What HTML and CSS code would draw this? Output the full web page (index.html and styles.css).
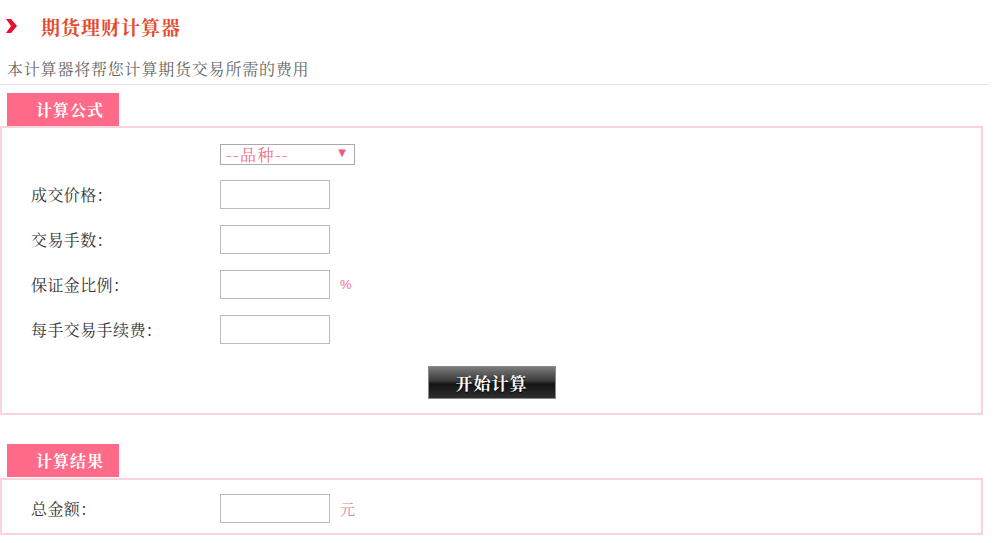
FILE: index.html
```html
<!DOCTYPE html>
<html lang="zh-CN">
<head>
    <meta charset="UTF-8">
    <title>期货理财计算器</title>
    <link rel="stylesheet" href="styles.css">
</head>
<body>
    <div class="page">
        <div class="title">
            <svg class="chevron" width="11" height="14" viewBox="0 0 11 14">
                <polygon points="0,0 5,0 11,7 5,14 0,14 5,7" fill="#e8102a"/>
            </svg>
            <h1>期货理财计算器</h1>
        </div>
        <p class="intro">本计算器将帮您计算期货交易所需的费用</p>

        <div class="tab">计算公式</div>
        <div class="box">
            <div class="form-row">
                <span class="label"></span>
                <div class="select-wrap">
                    <select class="kind">
                        <option>--品种--</option>
                    </select>
                    <span class="arrow">▼</span>
                </div>
            </div>
            <div class="form-row">
                <span class="label">成交价格：</span>
                <input type="text" class="field">
            </div>
            <div class="form-row">
                <span class="label">交易手数：</span>
                <input type="text" class="field">
            </div>
            <div class="form-row">
                <span class="label">保证金比例：</span>
                <input type="text" class="field">
                <span class="unit">%</span>
            </div>
            <div class="form-row">
                <span class="label">每手交易手续费：</span>
                <input type="text" class="field">
            </div>
            <div class="actions">
                <button class="calc-btn">开始计算</button>
            </div>
        </div>

        <div class="tab tab-result">计算结果</div>
        <div class="box box-result">
            <div class="form-row">
                <span class="label">总金额：</span>
                <input type="text" class="field">
                <span class="unit unit-yuan">元</span>
            </div>
        </div>
    </div>
</body>
</html>
```

FILE: styles.css
```css
* {
    margin: 0;
    padding: 0;
    box-sizing: border-box;
}

body {
    font-family: "Noto Serif CJK SC", "Liberation Serif", "Noto Sans CJK SC", serif;
    background: #fff;
    color: #333;
}

.page {
    width: 990px;
}

.title {
    display: flex;
    align-items: center;
    height: 52px;
    padding-left: 6px;
}

.chevron {
    margin-right: 24px;
}

.title h1 {
    font-size: 19px;
    font-weight: bold;
    color: #e64a2e;
    letter-spacing: 1px;
}

.intro {
    font-size: 16px;
    color: #666;
    letter-spacing: 0.8px;
    padding: 5px 0 0 7px;
    height: 33px;
    border-bottom: 1px solid #e6e6e6;
}

.tab {
    width: 112px;
    height: 33px;
    margin: 8px 0 0 7px;
    background: #ff6a88;
    color: #fff;
    font-size: 16px;
    font-weight: bold;
    line-height: 33px;
    padding-left: 29px;
    letter-spacing: 1px;
}

.tab-result {
    margin-top: 29px;
}

.box {
    width: 983px;
    border: 2px solid #f8d4df;
    padding: 15px 0 14px 29px;
    display: flex;
    flex-direction: column;
    gap: 16px;
}

.box-result {
    margin-top: 1px;
    padding: 14px 0 10px 29px;
}

.form-row {
    display: flex;
    align-items: center;
}

.label {
    width: 189px;
    font-size: 16px;
    color: #333;
    letter-spacing: 0.4px;
}

.select-wrap {
    position: relative;
    width: 135px;
    height: 21px;
}

.kind {
    appearance: none;
    width: 100%;
    height: 100%;
    border: 1px solid #aaa;
    background: #fff;
    color: #f06c8a;
    font-family: inherit;
    font-size: 16px;
    letter-spacing: 1.5px;
    padding-left: 5px;
    line-height: 19px;
}

.arrow {
    position: absolute;
    right: 9px;
    top: 4px;
    font-size: 10px;
    color: #ef5a7c;
    font-family: "DejaVu Sans", sans-serif;
    pointer-events: none;
}

.field {
    width: 110px;
    height: 29px;
    border: 1px solid #bbb;
    background: #fff;
}

.unit {
    margin-left: 10px;
    font-size: 13px;
    color: #f07090;
    font-family: "Liberation Sans", sans-serif;
}

.unit-yuan {
    font-size: 15px;
    color: #e0829a;
    font-family: inherit;
}

.actions {
    display: flex;
    justify-content: center;
    margin-top: 6px;
    padding-right: 29px;
}

.calc-btn {
    width: 128px;
    height: 33px;
    border: 1px solid #8a8a8a;
    background: linear-gradient(#7a7a7a 0%, #3a3a3a 45%, #141414 55%, #2e2e2e 100%);
    color: #fff;
    font-family: inherit;
    font-size: 17px;
    font-weight: bold;
    letter-spacing: 1px;
    text-shadow: 0 1px 1px #000;
    cursor: pointer;
}
```
